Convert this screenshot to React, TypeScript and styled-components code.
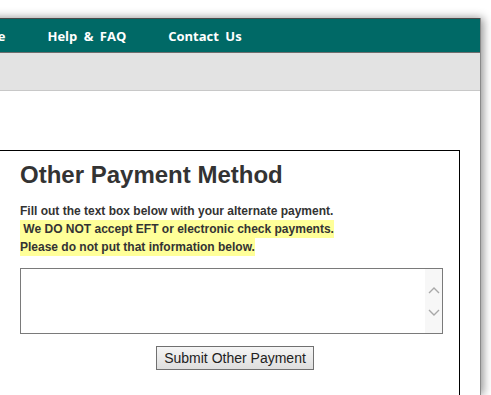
import styled, { createGlobalStyle } from 'styled-components';

const GlobalStyle = createGlobalStyle`
  html, body {
    margin: 0;
    padding: 0;
    background: #fff;
    overflow: hidden;
  }
  body {
    font-family: 'Liberation Sans', Arial, sans-serif;
  }
`;

const navItems = ['Home', 'Help & FAQ', 'Contact Us'];

export default function App() {
  return (
    <>
      <GlobalStyle />
      <Page>
        <NavBar>
          {navItems.map((item) => (
            <NavLink key={item}>{item}</NavLink>
          ))}
        </NavBar>
        <SubBar />
        <Content>
          <PaymentBox>
            <Title>Other Payment Method</Title>
            <Instructions>
              Fill out the text box below with your alternate payment.
              <br />
              <Highlight>
                {'\u00a0'}We DO NOT accept EFT or electronic check payments.
                <br />
                Please do not put that information below.
              </Highlight>
            </Instructions>
            <TextAreaFrame>
              <PaymentText aria-label="Other payment" />
              <ScrollTrack>
                <Chevron viewBox="0 0 12 7">
                  <path d="M1 6 L6 1 L11 6" />
                </Chevron>
                <Chevron viewBox="0 0 12 7">
                  <path d="M1 1 L6 6 L11 1" />
                </Chevron>
              </ScrollTrack>
            </TextAreaFrame>
            <ButtonRow>
              <SubmitButton type="button">Submit Other Payment</SubmitButton>
            </ButtonRow>
          </PaymentBox>
        </Content>
      </Page>
    </>
  );
}

const Page = styled.div`
  margin: 18px 0 0 -60px;
  width: 540px;
  height: 377px;
  overflow: hidden;
  background: #fff;
  border-right: 1px solid #8a8a8a;
  box-shadow: 2px 0 9px rgba(0, 0, 0, 0.45);
`;

const NavBar = styled.nav`
  display: flex;
  align-items: center;
  gap: 42px;
  height: 33px;
  padding-left: 27px;
  background: #006966;
  border-top: 1px solid #4a4a4a;
  border-bottom: 1px solid #6e6e6e;
`;

const NavLink = styled.a`
  font-family: 'Open Sans', 'DejaVu Sans', sans-serif;
  font-weight: 700;
  font-size: 13px;
  word-spacing: 3px;
  color: #fff;
  cursor: pointer;
`;

const SubBar = styled.div`
  height: 37px;
  background: #e3e3e3;
  border-bottom: 1px solid #c8c8c8;
`;

const Content = styled.div`
  padding: 59px 0 0 59px;
`;

const PaymentBox = styled.section`
  width: 461px;
  height: 260px;
  border: 1px solid #000;
  padding: 10px 0 0 20px;
  box-sizing: border-box;
`;

const Title = styled.h2`
  margin: 0 0 13px;
  font-size: 24px;
  font-weight: 700;
  color: #333;
  line-height: normal;
`;

const Instructions = styled.p`
  margin: 0 0 12px;
  font-size: 12px;
  font-weight: 700;
  line-height: 18px;
  color: #333;
`;

const Highlight = styled.span`
  background: #ffff99;
  padding: 2px 0;
`;

const TextAreaFrame = styled.div`
  display: flex;
  width: 423px;
  height: 66px;
  border: 1px solid #7a7a7a;
  box-sizing: border-box;
`;

const PaymentText = styled.textarea`
  flex: 1;
  border: none;
  outline: none;
  resize: none;
  padding: 2px;
  font-family: 'Liberation Sans', Arial, sans-serif;
  font-size: 13px;
`;

const ScrollTrack = styled.div`
  display: flex;
  flex-direction: column;
  align-items: center;
  justify-content: center;
  gap: 15px;
  width: 17px;
  background: #f7f7f7;
`;

const Chevron = styled.svg`
  width: 12px;
  height: 7px;
  fill: none;
  stroke: #a8a8a8;
  stroke-width: 1.4;
`;

const ButtonRow = styled.div`
  display: flex;
  justify-content: center;
  width: 430px;
  margin-top: 12px;
`;

const SubmitButton = styled.button`
  height: 24px;
  padding: 0 7px;
  font-family: 'Liberation Sans', Arial, sans-serif;
  font-size: 14px;
  color: #222;
  background: linear-gradient(#f5f5f5, #dedede);
  border: 1px solid #707070;
  border-radius: 0;
  cursor: pointer;
`;
